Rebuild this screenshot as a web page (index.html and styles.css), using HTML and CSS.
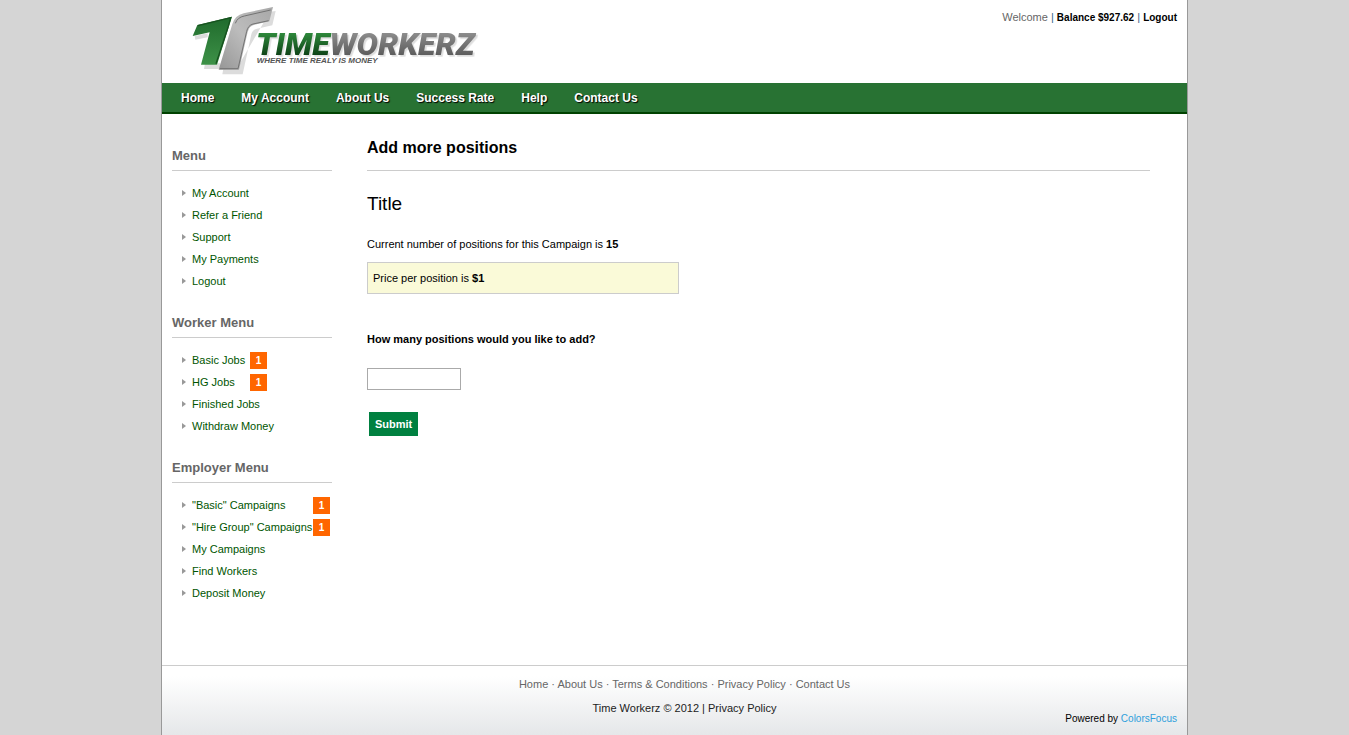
FILE: index.html
```html
<!DOCTYPE html>
<html lang="en">
<head>
  <meta charset="UTF-8">
  <meta name="viewport" content="width=device-width, initial-scale=1.0">
  <title>Time Workerz - Add more positions</title>
  <link rel="stylesheet" href="styles.css">
</head>
<body>
<div class="wrapper">
  <header class="header">
    <a class="logo" href="#" aria-label="Time Workerz">
      <svg width="290" height="72" viewBox="105 15 870 216">
        <defs>
          <linearGradient id="green" x1="0" y1="0" x2="0" y2="1">
            <stop offset="0" stop-color="#1f6a2c"/>
            <stop offset="1" stop-color="#3d9147"/>
          </linearGradient>
          <linearGradient id="silver" x1="1" y1="0" x2="0" y2="1">
            <stop offset="0" stop-color="#a8a8a8"/>
            <stop offset=".5" stop-color="#bcbcbc"/>
            <stop offset="1" stop-color="#969696"/>
          </linearGradient>
          <linearGradient id="time" x1="0" y1="0" x2="0" y2="1">
            <stop offset=".2" stop-color="#2f8a3c"/>
            <stop offset=".8" stop-color="#0d4217"/>
          </linearGradient>
          <linearGradient id="workerz" x1="0" y1="0" x2="0" y2="1">
            <stop offset=".2" stop-color="#8d8d8d"/>
            <stop offset=".8" stop-color="#5c5c5c"/>
          </linearGradient>
        </defs>
        <!-- shadow -->
        <path fill="#dcdcdc" d="M119 108L158 100V112L121 119ZM150 190H196V207H147ZM345 35L362 33L352 76L306 86Q292 89 289 103L263 223H202L205 206H245Z"/>
        <!-- green T -->
        <path fill="url(#green)" d="M127 75L231 50L186 194H138L164 97L113 108Z"/>
        <path fill="none" stroke="#17521f" stroke-width="4" d="M129 77L227 53L219 82L183 191"/>
        <!-- silver T -->
        <path fill="url(#silver)" d="M232 72Q240 46 266 40L354 21L343 64L298 74Q282 78 278 96L252 209H191Z"/>
        <path fill="none" stroke="#737373" stroke-width="3" d="M241 70Q247 52 268 48L347 30M341 62L294 72Q279 76 275 94L249 206H195"/>
        <text class="logo-name" x="303" y="165" fill="url(#time)">TIME<tspan fill="url(#workerz)">WORKERZ</tspan></text>
        <text class="logo-tag" x="305" y="189">WHERE TIME REALY IS MONEY</text>
      </svg>
    </a>
    <div class="account">
      <span>Welcome</span> | <b>Balance $927.62</b> | <a href="#">Logout</a>
    </div>
  </header>

  <nav class="nav">
    <a href="#">Home</a>
    <a href="#">My Account</a>
    <a href="#">About Us</a>
    <a href="#">Success Rate</a>
    <a href="#">Help</a>
    <a href="#">Contact Us</a>
  </nav>

  <div class="content">
    <aside class="sidebar">
      <h3>Menu</h3>
      <ul>
        <li><a href="#">My Account</a></li>
        <li><a href="#">Refer a Friend</a></li>
        <li><a href="#">Support</a></li>
        <li><a href="#">My Payments</a></li>
        <li><a href="#">Logout</a></li>
      </ul>

      <h3>Worker Menu</h3>
      <ul class="counts">
        <li><a href="#">Basic Jobs</a><span class="count">1</span></li>
        <li><a href="#">HG Jobs</a><span class="count">1</span></li>
        <li><a href="#">Finished Jobs</a></li>
        <li><a href="#">Withdraw Money</a></li>
      </ul>

      <h3>Employer Menu</h3>
      <ul class="counts counts-wide">
        <li><a href="#">"Basic" Campaigns</a><span class="count">1</span></li>
        <li><a href="#">"Hire Group" Campaigns</a><span class="count">1</span></li>
        <li><a href="#">My Campaigns</a></li>
        <li><a href="#">Find Workers</a></li>
        <li><a href="#">Deposit Money</a></li>
      </ul>
    </aside>

    <main class="main">
      <h1>Add more positions</h1>
      <h2>Title</h2>
      <p>Current number of positions for this Campaign is <b>15</b></p>
      <div class="price">Price per position is <b>$1</b></div>
      <form action="#" method="post">
        <label for="positions">How many positions would you like to add?</label>
        <input id="positions" name="positions" type="text">
        <button type="submit">Submit</button>
      </form>
    </main>
  </div>

  <footer class="footer">
    <div class="footer-links">
      <a href="#">Home</a> · <a href="#">About Us</a> · <a href="#">Terms &amp; Conditions</a> · <a href="#">Privacy Policy</a> · <a href="#">Contact Us</a>
    </div>
    <div class="copyright">Time Workerz © 2012 | <a href="#">Privacy Policy</a></div>
    <div class="powered">Powered by <a href="#">ColorsFocus</a></div>
  </footer>
</div>
</body>
</html>
```
FILE: styles.css
```css
* { box-sizing: border-box; }
body { margin: 0; background: #d5d5d5; color: #000; font: 11px/16px "Liberation Sans", Arial, Helvetica, sans-serif; }
a { color: inherit; text-decoration: none; }
ul { margin: 0; padding: 0; list-style: none; }

.wrapper { display: flex; flex-direction: column; max-width: 1027px; min-height: 100vh; margin: 0 auto; background: #fff; border: solid #999; border-width: 0 1px; }

/* header */
.header { display: flex; justify-content: space-between; align-items: flex-start; padding: 5px 10px 6px 28px; }
.logo svg { display: block; }
.logo-name { font: italic 900 96px Roboto, Arial, sans-serif; filter: drop-shadow(5px 5px 0 #ddd); }
.logo-tag { font: italic bold 24px "Liberation Sans", Arial, sans-serif; fill: #555; }
.account { padding-top: 4px; color: #36648b; }
.account span { color: #666; }
.account b, .account a { color: #000; font-size: 10px; font-weight: bold; }

.nav { display: flex; flex-wrap: wrap; gap: 0 27px; padding: 2px 19px 0; background: #287233; border-bottom: 2px solid #004200; }
.nav a { color: #fff; font-size: 12px; font-weight: bold; line-height: 27px; text-shadow: 1px 1px 1px #000; }

.content { display: flex; flex: 1; gap: 35px; padding: 0 37px 30px 10px; }

/* sidebar */
.sidebar { flex: 0 0 160px; padding-top: 33px; }
.sidebar h3 { margin: 0; padding: 1px 0 6px; border-bottom: 1px solid #ccc; color: #666; font-size: 13px; line-height: 16px; }
.sidebar ul { margin: 11px 0 22px; }
.sidebar li { display: flex; align-items: center; height: 22px; padding-left: 10px; color: #005500; white-space: nowrap; }
.sidebar li::before { content: ""; margin-right: 6px; border: 3px solid transparent; border-left: 4px solid #999; border-right: 0; }
.counts a { min-width: 58px; }
.counts-wide a { min-width: 121px; }
.count { width: 17px; background: #f60; color: #fff; font-size: 10px; font-weight: bold; line-height: 17px; text-align: center; }

/* main column */
.main { flex: 1; min-width: 0; padding-top: 24px; }
.main h1 { margin: 0 0 23px; padding-bottom: 12px; border-bottom: 1px solid #ccc; font-size: 16px; line-height: 20px; }
.main h2 { margin: 0 0 22px; font-size: 19px; font-weight: normal; line-height: 20px; }
.main p { margin: 0 0 10px; }
.price { max-width: 312px; margin-bottom: 37px; padding: 7px 5px; background: #fafad8; border: 1px solid #ccc; }
form label { display: block; margin-bottom: 21px; font-weight: bold; }
form input { display: block; width: 94px; height: 22px; margin-bottom: 22px; border: 1px solid #aaa; }
form button { height: 24px; margin-left: 2px; padding: 0 6px; background: #008040; border: 0; color: #fff; font: bold 11px "Liberation Sans", Arial, sans-serif; }

/* footer */
.footer { padding: 10px 10px 8px; border-top: 1px solid #ccc; background: linear-gradient(#fff 15%, #e5e7e9); text-align: center; }
.footer-links, .copyright { padding-left: 20px; }
.footer-links { color: #666; }
.copyright { margin-top: 8px; color: #222; }
.powered { margin-top: -5px; font-size: 10px; text-align: right; }
.powered a { color: #2e9fdc; }
```
